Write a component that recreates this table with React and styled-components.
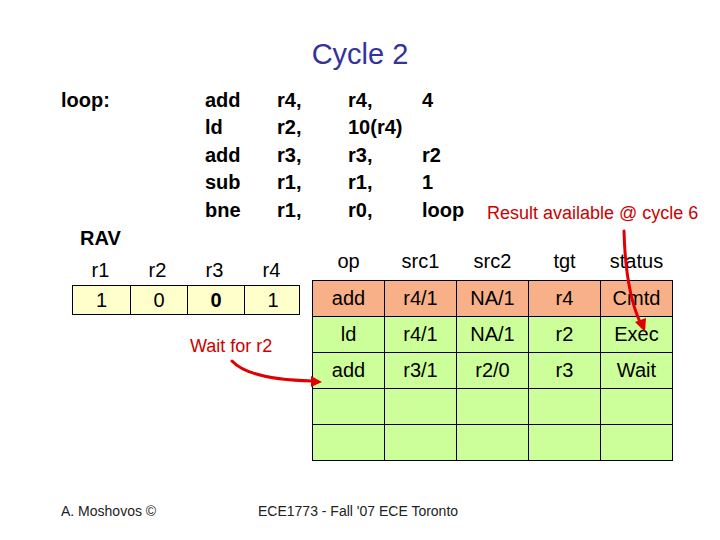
import React from 'react';
import styled, { createGlobalStyle } from 'styled-components';

const GlobalStyle = createGlobalStyle`
  html, body { margin: 0; padding: 0; background: #fff; }
  body { font-family: "Liberation Sans", Arial, sans-serif; color: #000; }
`;

const Slide = styled.div`
  position: relative;
  width: 720px;
  height: 540px;
  display: flex;
  flex-direction: column;
  background: #fff;
  overflow: hidden;
`;

const Title = styled.h1`
  margin: 37px 0 0;
  text-align: center;
  font-size: 29px;
  line-height: 34px;
  font-weight: normal;
  color: #333399;
`;

const Code = styled.div`
  display: grid;
  grid-template-columns: 144px 72px 71px 74px 65px auto;
  grid-auto-rows: 27.5px;
  align-items: center;
  margin-top: 15px;
  padding-left: 61px;
  font-size: 20px;
  font-weight: bold;
  line-height: 24px;
`;

const Note = styled.span`
  color: ${({ $color }) => $color || '#cc0000'};
  font-size: 18px;
  font-weight: normal;
  line-height: 22px;
  white-space: nowrap;
  padding-top: ${({ $drop }) => $drop || 0}px;
`;

const Lower = styled.div`
  display: grid;
  grid-template-columns: 228px 361px;
  column-gap: 12px;
  padding-left: 72px;
`;

const Left = styled.div`
  display: flex;
  flex-direction: column;
`;

const RavTitle = styled.div`
  margin: 2px 0 0 8px;
  font-size: 20px;
  font-weight: bold;
  line-height: 24px;
`;

const RegRow = styled.div`
  display: grid;
  grid-template-columns: repeat(4, 57px);
  margin-top: 8px;
  font-size: 20px;
  line-height: 24px;
  text-align: center;
`;

const RegBox = styled.div`
  display: grid;
  grid-template-columns: repeat(4, 57px);
  margin-top: 3px;
  border: 1px solid #000;
  background: #ffffcc;
`;

const RegCell = styled.div`
  height: 28px;
  line-height: 28px;
  text-align: center;
  font-size: 20px;
  font-weight: ${({ $bold }) => ($bold ? 'bold' : 'normal')};
  border-left: ${({ $first }) => ($first ? 'none' : '1px solid #000')};
`;

const WaitNote = styled(Note)`
  margin: 20px 0 0 118px;
`;

const Right = styled.div`
  padding-top: 20px;
`;

const Table = styled.table`
  border-collapse: collapse;
  table-layout: fixed;
  width: 361px;
  font-size: 20px;
  text-align: center;
`;

const Th = styled.th`
  width: 72px;
  height: 36px;
  padding: 0;
  font-weight: normal;
  vertical-align: middle;
`;

const Tr = styled.tr`
  background: ${({ $done }) => ($done ? '#f8b088' : '#ccff99')};
`;

const Td = styled.td`
  height: 35px;
  padding: 0;
  border: 1px solid #000;
  vertical-align: middle;
`;

const Footer = styled.div`
  display: flex;
  margin-top: auto;
  padding: 0 0 21px 61px;
  font-size: 14px;
  line-height: 16px;
  color: #222;
`;

const FootLeft = styled.span`
  width: 197px;
`;

const Overlay = styled.svg`
  position: absolute;
  left: 0;
  top: 0;
  pointer-events: none;
`;

const program = [
  ['loop:', 'add', 'r4,', 'r4,', '4'],
  ['', 'ld', 'r2,', '10(r4)', ''],
  ['', 'add', 'r3,', 'r3,', 'r2'],
  ['', 'sub', 'r1,', 'r1,', '1'],
  ['', 'bne', 'r1,', 'r0,', 'loop'],
];

const rav = [
  { reg: 'r1', v: '1' },
  { reg: 'r2', v: '0' },
  { reg: 'r3', v: '0', bold: true },
  { reg: 'r4', v: '1' },
];

const heads = ['op', 'src1', 'src2', 'tgt', 'status'];

const rows = [
  { cells: ['add', 'r4/1', 'NA/1', 'r4', 'Cmtd'], done: true },
  { cells: ['ld', 'r4/1', 'NA/1', 'r2', 'Exec'] },
  { cells: ['add', 'r3/1', 'r2/0', 'r3', 'Wait'] },
  { cells: ['', '', '', '', ''] },
  { cells: ['', '', '', '', ''] },
];

export default function App() {
  return (
    <Slide>
      <GlobalStyle />
      <Title>Cycle 2</Title>

      <Code>
        {program.map((line, i) => (
          <React.Fragment key={i}>
            {line.map((t, j) => (
              <span key={j}>{t}</span>
            ))}
            {i === 4 ? <Note $drop={6}>Result available @ cycle 6</Note> : <span />}
          </React.Fragment>
        ))}
      </Code>

      <Lower>
        <Left>
          <RavTitle>RAV</RavTitle>
          <RegRow>
            {rav.map((r) => (
              <span key={r.reg}>{r.reg}</span>
            ))}
          </RegRow>
          <RegBox>
            {rav.map((r, i) => (
              <RegCell key={r.reg} $first={i === 0} $bold={r.bold}>
                {r.v}
              </RegCell>
            ))}
          </RegBox>
          <WaitNote>Wait for r2</WaitNote>
        </Left>

        <Right>
          <Table>
            <thead>
              <tr>
                {heads.map((h) => (
                  <Th key={h}>{h}</Th>
                ))}
              </tr>
            </thead>
            <tbody>
              {rows.map((r, i) => (
                <Tr key={i} $done={r.done}>
                  {r.cells.map((c, j) => (
                    <Td key={j}>{c}</Td>
                  ))}
                </Tr>
              ))}
            </tbody>
          </Table>
        </Right>
      </Lower>

      <Footer>
        <FootLeft>A. Moshovos ©</FootLeft>
        <span>ECE1773 - Fall '07 ECE Toronto</span>
      </Footer>

      <Overlay width="720" height="540" viewBox="0 0 720 540">
        <g stroke="#e00000" strokeWidth="3" fill="none" strokeLinecap="round">
          <path d="M624 231 C 625 270, 630 300, 640 322" />
          <path d="M232 361 C 244 374, 270 380, 312 381" />
        </g>
        <g fill="#e00000">
          <polygon points="645,332 635,322 646,318" />
          <polygon points="322,382 311,376 311,387" />
        </g>
      </Overlay>
    </Slide>
  );
}
